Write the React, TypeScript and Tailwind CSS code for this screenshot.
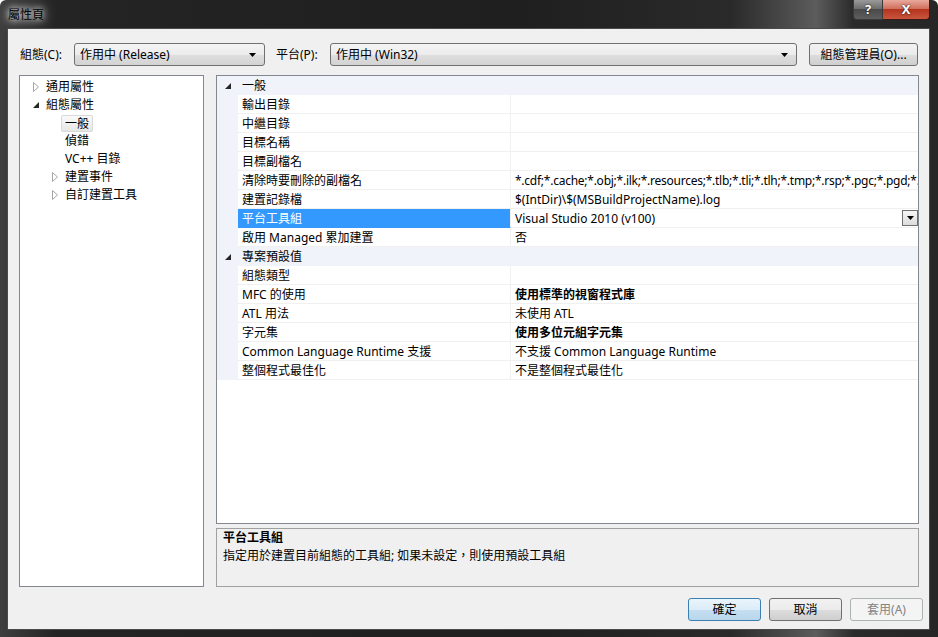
import React from 'react'

type Row = {
  kind: 'cat' | 'prop'
  name: string
  value?: string
  bold?: boolean
  selected?: boolean
  tight?: boolean
}

const rows: Row[] = [
  { kind: 'cat', name: '一般' },
  { kind: 'prop', name: '輸出目錄', value: '' },
  { kind: 'prop', name: '中繼目錄', value: '' },
  { kind: 'prop', name: '目標名稱', value: '' },
  { kind: 'prop', name: '目標副檔名', value: '' },
  {
    kind: 'prop',
    name: '清除時要刪除的副檔名',
    value: '*.cdf;*.cache;*.obj;*.ilk;*.resources;*.tlb;*.tli;*.tlh;*.tmp;*.rsp;*.pgc;*.pgd;*.r',
    tight: true,
  },
  { kind: 'prop', name: '建置記錄檔', value: '$(IntDir)\\$(MSBuildProjectName).log' },
  { kind: 'prop', name: '平台工具組', value: 'Visual Studio 2010 (v100)', selected: true },
  { kind: 'prop', name: '啟用 Managed 累加建置', value: '否' },
  { kind: 'cat', name: '專案預設值' },
  { kind: 'prop', name: '組態類型', value: '' },
  { kind: 'prop', name: 'MFC 的使用', value: '使用標準的視窗程式庫', bold: true },
  { kind: 'prop', name: 'ATL 用法', value: '未使用 ATL' },
  { kind: 'prop', name: '字元集', value: '使用多位元組字元集', bold: true },
  { kind: 'prop', name: 'Common Language Runtime 支援', value: '不支援 Common Language Runtime' },
  { kind: 'prop', name: '整個程式最佳化', value: '不是整個程式最佳化' },
]

// little black arrow used on combo boxes
const DownArrow = () => (
  <svg width="7" height="4" viewBox="0 0 7 4">
    <polygon points="0,0 7,0 3.5,4" fill="#000" />
  </svg>
)

const Collapsed = () => (
  <svg width="6" height="10" viewBox="0 0 6 10" className="shrink-0">
    <polygon points="0.5,0.5 5.5,5 0.5,9.5" fill="#fff" stroke="#a6a6a6" strokeWidth="1" />
  </svg>
)

const Expanded = () => (
  <svg width="6" height="6" viewBox="0 0 6 6" className="shrink-0">
    <polygon points="6,0 6,6 0,6" fill="#262626" />
  </svg>
)

const ComboBox = ({ text, width }: { text: string; width: string }) => (
  <div
    className={`${width} h-[23px] flex items-center justify-between pl-[5px] pr-[8px] border border-[#707070] rounded-[3px] bg-[linear-gradient(#f4f4f4,#ececec_50%,#dfdfdf_50%,#d3d3d3)]`}
  >
    <span className="text-[12px] text-black">{text}</span>
    <DownArrow />
  </div>
)

const TreeItem = ({
  level,
  text,
  arrow,
  selected,
}: {
  level: number
  text: string
  arrow?: 'open' | 'closed'
  selected?: boolean
}) => (
  <div className="h-[18px] flex items-center" style={{ paddingLeft: 13 + level * 19 }}>
    <div className="w-[13px] flex items-center">
      {arrow === 'closed' && <Collapsed />}
      {arrow === 'open' && <Expanded />}
    </div>
    <span
      className={
        selected
          ? 'ml-[-4px] px-[3px] h-[17px] leading-[15px] border border-[#d9d9d9] rounded-[2px] bg-[linear-gradient(#fafafa,#e6e6e6)] text-[12px]'
          : 'text-[12px]'
      }
    >
      {text}
    </span>
  </div>
)

const GridRow = ({ row }: { row: Row }) => {
  if (row.kind === 'cat') {
    return (
      <div className="h-[19px] flex items-center bg-[#f0f3f9]">
        <div className="w-[21px] flex items-center pl-[8px]">
          <Expanded />
        </div>
        <span className="pl-[4px] pt-[1px] text-[12px] leading-[18px]">{row.name}</span>
      </div>
    )
  }
  return (
    <div className="h-[19px] flex">
      <div className="w-[21px] shrink-0 bg-[#f0f3f9]" />
      <div
        className={`w-[273px] shrink-0 pl-[4px] pt-[1px] text-[12px] leading-[17px] border-r border-b border-[#f0f0f0] ${
          row.selected ? 'bg-[#3399ff] text-white border-b-[#3399ff]' : 'bg-white'
        }`}
      >
        {row.name}
      </div>
      <div className="flex-1 min-w-0 flex items-center border-b border-[#f0f0f0] bg-white">
        <span
          className={`flex-1 min-w-0 pl-[4px] pt-[1px] text-[12px] leading-[17px] whitespace-nowrap overflow-hidden ${
            row.bold ? 'font-bold' : ''
          } ${row.tight ? 'tracking-[-0.25px]' : ''}`}
        >
          {row.value}
        </span>
        {row.selected && (
          <div className="w-[16px] h-[16px] flex items-center justify-center border border-[#6f6f6f] bg-[linear-gradient(#f6f6f6,#dcdcdc)]">
            <DownArrow />
          </div>
        )}
      </div>
    </div>
  )
}

const Button = ({ text, kind }: { text: string; kind?: 'default' | 'disabled' }) => {
  let cls = 'border-[#707070] bg-[linear-gradient(#f2f2f2,#ebebeb_50%,#dddddd_50%,#cfcfcf)] text-black'
  if (kind === 'default')
    cls = 'border-[#3c7fb1] bg-[linear-gradient(#eaf5fc,#dbecf8_50%,#c6dff1_50%,#b8d6ec)] text-black'
  if (kind === 'disabled') cls = 'border-[#adb2b5] bg-[#f4f4f4] text-[#838383]'
  return (
    <div
      className={`w-[73px] h-[23px] flex items-center justify-center border rounded-[3px] text-[12px] ${cls}`}
    >
      {text}
    </div>
  )
}

export default function App() {
  return (
    <div className="w-[938px] h-[637px] flex flex-col rounded-t-[6px] bg-[linear-gradient(90deg,#3e3e3e_0%,#242424_6%,#1f1f1f_55%,#2a2a2a_78%,#5c5c5c_87%,#2a2a2a_91%,#262626_100%)] font-['Noto_Sans','Noto_Sans_CJK_TC',sans-serif] text-black overflow-hidden">
      {/* title bar */}
      <div className="h-[28px] shrink-0 flex items-start">
        <div className="pl-[8px] pt-[6px] text-[12px] text-black [text-shadow:0_0_6px_rgba(255,255,255,0.9),0_0_10px_rgba(255,255,255,0.7),0_0_16px_rgba(255,255,255,0.5)]">
          屬性頁
        </div>
        <div className="flex-1" />
        <div className="mr-[8px] flex h-[20px]">
          <div className="w-[30px] h-[20px] flex items-center justify-center border border-[#3a3a3a] border-t-0 rounded-bl-[4px] bg-[linear-gradient(#9a9a9a,#6e6e6e_45%,#4a4a4a_50%,#5e5e5e)] text-white font-bold text-[13px] [text-shadow:0_0_2px_#000]">
            ?
          </div>
          <div className="w-[47px] h-[20px] flex items-center justify-center border border-[#3a1a14] border-t-0 border-l-0 rounded-br-[4px] bg-[linear-gradient(#e9a99c,#d0705e_45%,#b5351f_50%,#c8553c)] text-white font-bold text-[13px] [text-shadow:0_0_2px_#000]">
            X
          </div>
        </div>
      </div>

      {/* client area */}
      <div className="ml-[7px] mr-[8px] h-[602px] border border-[#4a4a4a] bg-[#f0f0f0] pl-[11px] pt-[14px] flex flex-col">
        <div className="flex items-center h-[23px]">
          <div className="w-[55px] pl-[1px] text-[12px]">組態(C):</div>
          <ComboBox text="作用中 (Release)" width="w-[191px]" />
          <div className="w-[65px] pl-[11px] text-[12px]">平台(P):</div>
          <ComboBox text="作用中 (Win32)" width="w-[467px]" />
          <div className="ml-[12px] w-[109px] h-[23px] flex items-center justify-center border border-[#707070] rounded-[3px] bg-[linear-gradient(#f2f2f2,#ebebeb_50%,#dddddd_50%,#cfcfcf)] text-[12px]">
            組態管理員(O)...
          </div>
        </div>

        <div className="mt-[9px] flex gap-[12px] h-[512px]">
          {/* tree */}
          <div className="w-[185px] border border-[#828790] bg-white pt-[2px]">
            <TreeItem level={0} text="通用屬性" arrow="closed" />
            <TreeItem level={0} text="組態屬性" arrow="open" />
            <TreeItem level={1} text="一般" selected />
            <TreeItem level={1} text="偵錯" />
            <TreeItem level={1} text="VC++ 目錄" />
            <TreeItem level={1} text="建置事件" arrow="closed" />
            <TreeItem level={1} text="自訂建置工具" arrow="closed" />
          </div>

          {/* property grid + description */}
          <div className="w-[703px] flex flex-col gap-[4px]">
            <div className="h-[449px] border border-[#828790] bg-white overflow-hidden">
              {rows.map((r, i) => (
                <GridRow key={i} row={r} />
              ))}
            </div>
            <div className="h-[59px] border border-[#a0a0a0] bg-[#f0f0f0] pl-[6px] text-[12px] leading-[18px]">
              <div className="font-bold">平台工具組</div>
              <div>指定用於建置目前組態的工具組; 如果未設定，則使用預設工具組</div>
            </div>
          </div>
        </div>

        <div className="mt-[11px] flex justify-end gap-[8px] pr-[6px]">
          <Button text="確定" kind="default" />
          <Button text="取消" />
          <Button text="套用(A)" kind="disabled" />
        </div>
      </div>
    </div>
  )
}
